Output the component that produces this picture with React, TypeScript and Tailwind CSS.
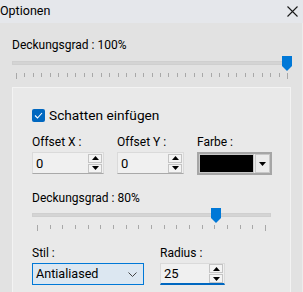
import React from 'react';

const font = { fontFamily: 'Roboto, "Noto Sans", "Liberation Sans", sans-serif' };

const Thumb = () => (
  <svg width="10" height="15" viewBox="0 0 10 15" className="block">
    <path d="M0 0 H10 V10 L5 15 L0 10 Z" fill="#0078d7" />
  </svg>
);

const Slider: React.FC<{ ticks: number; thumbLeft: number; padX: number }> = ({ ticks, thumbLeft, padX }) => (
  <div className="relative w-full">
    <div className="h-[14px] flex items-center">
      <div className="w-full h-[4px] bg-[#d4d4d4] border border-[#cfcfcf]" />
    </div>
    <div className="absolute top-0" style={{ left: thumbLeft }}>
      <Thumb />
    </div>
    <div className="flex justify-between h-[7px] items-start" style={{ paddingLeft: padX, paddingRight: padX }}>
      {Array.from({ length: ticks }).map((_, i) => (
        <div key={i} className={`w-px bg-[#a8a8a8] ${i === ticks - 1 || i === 0 ? 'h-[6px]' : 'h-[4px]'} mt-[3px]`} />
      ))}
    </div>
  </div>
);

const Spinner = () => (
  <div className="flex flex-col gap-px">
    <div className="w-[14px] h-[9px] bg-[#f4f4f4] border border-[#c4c4c4] flex items-center justify-center">
      <svg width="7" height="4" viewBox="0 0 7 4"><path d="M0 4 L3.5 0 L7 4 Z" fill="#000" /></svg>
    </div>
    <div className="w-[14px] h-[9px] bg-[#f4f4f4] border border-[#c4c4c4] flex items-center justify-center">
      <svg width="7" height="4" viewBox="0 0 7 4"><path d="M0 0 L7 0 L3.5 4 Z" fill="#000" /></svg>
    </div>
  </div>
);

const NumInput: React.FC<{ value: string; width: number; focus?: boolean }> = ({ value, width, focus }) => (
  <div
    className={`h-[22px] flex items-center justify-between pl-[3px] pr-[1px] bg-[#f0f0f0] border border-[#dadada] ${focus ? 'border-b-2 border-b-[#0067c0]' : 'border-b-[#a9a9a9]'}`}
    style={{ width }}
  >
    <span className="text-[13px] text-black leading-none">{value}</span>
    <Spinner />
  </div>
);

const Label: React.FC<{ children: React.ReactNode }> = ({ children }) => (
  <div className="text-[12px] leading-[15px] text-black mb-[2px]">{children}</div>
);

export default function App() {
  return (
    <div className="w-[303px] h-[292px] overflow-hidden bg-[#e2e2e2] flex flex-col" style={font}>
      <div className="h-[23px] bg-[#e5e7eb] flex items-center justify-between pr-[5px] shrink-0">
        <span className="text-[12.5px] text-black leading-none">Optionen</span>
        <svg width="11" height="11" viewBox="0 0 11 11">
          <path d="M0.5 0.5 L10.5 10.5 M10.5 0.5 L0.5 10.5" stroke="#1a1a1a" strokeWidth="1.1" />
        </svg>
      </div>
      <div className="flex-1 flex flex-col pl-[12px] pr-[11px] border-r border-[#ececec]">
        <div className="text-[12px] leading-[16px] text-black mt-[14px]">Deckungsgrad : 100%</div>
        <div className="mt-[3px] w-[280px]">
          <Slider ticks={33} thumbLeft={270} padX={4} />
        </div>
        <div className="mt-[10px] flex-1 bg-[#e9e9e9] border-t border-l border-r border-[#f3f3f3] pl-[19px] pr-[18px] pt-[21px]">
          <div className="flex items-center gap-[4px] h-[13px]">
            <div className="w-[13px] h-[13px] rounded-[2px] bg-[#0067c0] flex items-center justify-center">
              <svg width="9" height="7" viewBox="0 0 9 7">
                <path d="M1 3.5 L3.5 6 L8 1" stroke="#fff" strokeWidth="1.1" fill="none" />
              </svg>
            </div>
            <span className="text-[13.7px] leading-none text-black">Schatten einfügen</span>
          </div>
          <div className="flex mt-[13px]">
            <div className="w-[85px]">
              <Label>Offset X :</Label>
              <NumInput value="0" width={72} />
            </div>
            <div className="w-[80px]">
              <Label>Offset Y :</Label>
              <NumInput value="0" width={67} />
            </div>
            <div>
              <Label>Farbe :</Label>
              <div className="w-[75px] h-[23px] border-2 border-[#a6a6a6] bg-[#e9e9e9] flex items-center gap-[1px]">
                <div className="w-[55px] h-[19px] bg-black border border-[#c8c8c8]" />
                <div className="flex-1 h-[19px] border border-[#c8c8c8] bg-[#ececec] flex items-center justify-center">
                  <svg width="7" height="4" viewBox="0 0 7 4"><path d="M0 0 L7 0 L3.5 4 Z" fill="#000" /></svg>
                </div>
              </div>
            </div>
          </div>
          <div className="text-[12px] leading-[16px] text-black mt-[15px]">Deckungsgrad : 80%</div>
          <div className="mt-[2px] w-[239px]">
            <Slider ticks={19} thumbLeft={179} padX={5} />
          </div>
          <div className="flex mt-[17px]">
            <div className="w-[128px]">
              <Label>Stil :</Label>
              <div className="w-[112px] h-[22px] bg-[#dce7f1] border border-[#0078d7] flex items-center justify-between pl-[3px] pr-[6px]">
                <span className="text-[12.6px] leading-none text-black">Antialiased</span>
                <svg width="9" height="5" viewBox="0 0 9 5">
                  <path d="M0.5 0.5 L4.5 4.5 L8.5 0.5" stroke="#444" strokeWidth="1" fill="none" />
                </svg>
              </div>
            </div>
            <div>
              <Label>Radius :</Label>
              <NumInput value="25" width={65} focus />
            </div>
          </div>
        </div>
      </div>
    </div>
  );
}
